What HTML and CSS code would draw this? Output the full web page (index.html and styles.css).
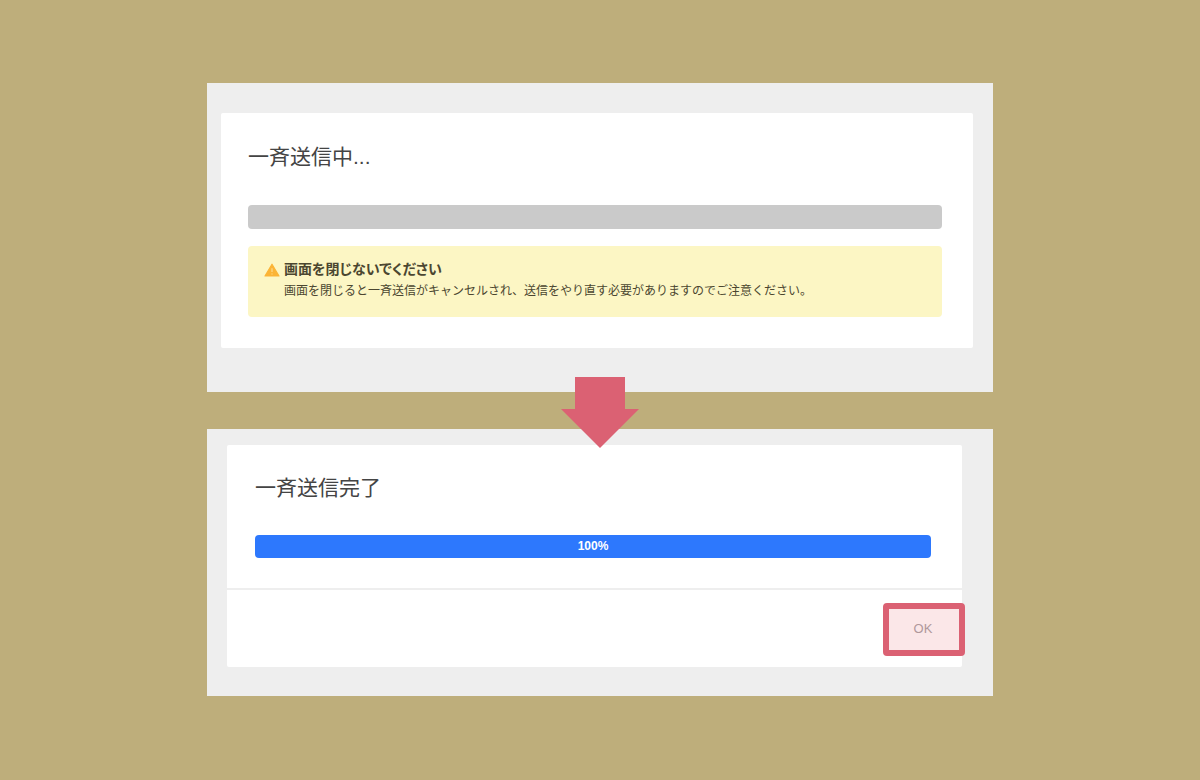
FILE: index.html
```html
<!DOCTYPE html>
<html lang="ja">
<head>
<meta charset="utf-8">
<meta name="viewport" content="width=device-width, initial-scale=1">
<title>一斉送信</title>
<link rel="stylesheet" href="styles.css">
</head>
<body>
<main class="steps">
  <section class="panel panel-sending">
    <div class="card card-sending">
      <h1 class="title">一斉送信中...</h1>
      <div class="progress progress-waiting" role="progressbar" aria-label="一斉送信中" aria-valuenow="0" aria-valuemin="0" aria-valuemax="100"></div>
      <div class="notice" role="alert">
        <svg class="notice-icon" viewBox="0 0 16 14" aria-hidden="true">
          <path d="M8 1.2 15 13H1Z" fill="#fbb436" stroke="#fbb436" stroke-width="1.2" stroke-linejoin="round"/>
          <path d="M8 5.2V9M8 10.4v1.2" stroke="#fdd98c" stroke-width="1.2"/>
        </svg>
        <div class="notice-body">
          <p class="notice-title">画面を閉じないでください</p>
          <p class="notice-text">画面を閉じると一斉送信がキャンセルされ、送信をやり直す必要がありますのでご注意ください。</p>
        </div>
      </div>
    </div>
  </section>
  <div class="arrow-row">
    <svg class="arrow" viewBox="0 0 78 71" aria-hidden="true"><path d="M14 0H64V32H78L39 71 0 32H14Z" fill="#db6173"/></svg>
  </div>
  <section class="panel panel-done">
    <div class="card">
      <div class="card-body">
        <h2 class="title">一斉送信完了</h2>
        <div class="progress progress-done" role="progressbar" aria-label="一斉送信完了" aria-valuenow="100" aria-valuemin="0" aria-valuemax="100">100%</div>
      </div>
      <div class="card-footer">
        <button class="ok" type="button">OK</button>
      </div>
    </div>
  </section>
</main>
</body>
</html>
```
FILE: styles.css
```css
* {
  box-sizing: border-box;
}

body {
  margin: 0;
  background: #beae7b;
  color: #444;
  font-family: "Liberation Sans", "Noto Sans CJK JP", sans-serif;
}

.steps {
  max-width: 786px;
  margin: 0 auto;
  padding: 83px 0;
}

.panel {
  background: #eee;
}

.panel-sending {
  padding: 30px 20px 44px 14px;
}

.panel-done {
  padding: 16px 31px 29px 20px;
}

.card {
  background: #fff;
  border-radius: 2px;
}

.card-sending {
  padding: 28px 31px 31px 27px;
}

.card-body {
  padding: 27px 31px 30px 28px;
}

.title {
  margin: 0;
  font-size: 21px;
  font-weight: 400;
  line-height: 32px;
}

.progress {
  height: 24px;
  margin-top: 32px;
  border-radius: 4px;
}

.progress-waiting {
  background: #cacaca;
}

.progress-done {
  height: 23px;
  margin-top: 31px;
  background: #2d78fd;
  color: #fff;
  font-size: 12px;
  font-weight: 700;
  line-height: 22px;
  text-align: center;
}

.notice {
  display: flex;
  gap: 4px;
  margin-top: 17px;
  padding: 13px 16px 16px;
  border-radius: 4px;
  background: #fcf6c4;
}

.notice-icon {
  flex: none;
  width: 16px;
  height: 14px;
  margin-top: 4px;
}

.notice-body {
  color: #4b4630;
}

.notice-title,
.notice-text {
  margin: 0;
  line-height: 20px;
}

.notice-title {
  font-size: 14px;
  font-weight: 700;
  font-feature-settings: "palt";
}

.notice-text {
  margin-top: 2px;
  font-size: 12px;
}

.arrow-row {
  position: relative;
  height: 37px;
}

.arrow {
  position: absolute;
  top: -15px;
  left: 50%;
  width: 78px;
  height: 71px;
  transform: translateX(-50%);
}

.card-footer {
  display: flex;
  justify-content: flex-end;
  padding: 13px 0 11px;
  border-top: 2px solid #eee;
}

.ok {
  width: 82px;
  height: 53px;
  margin-right: -3px;
  padding: 0 2px 2px 0;
  border: 6px solid #db6173;
  border-radius: 4px;
  background: #fbe7e8;
  color: #b0989b;
  font-family: inherit;
  font-size: 13px;
}
```
